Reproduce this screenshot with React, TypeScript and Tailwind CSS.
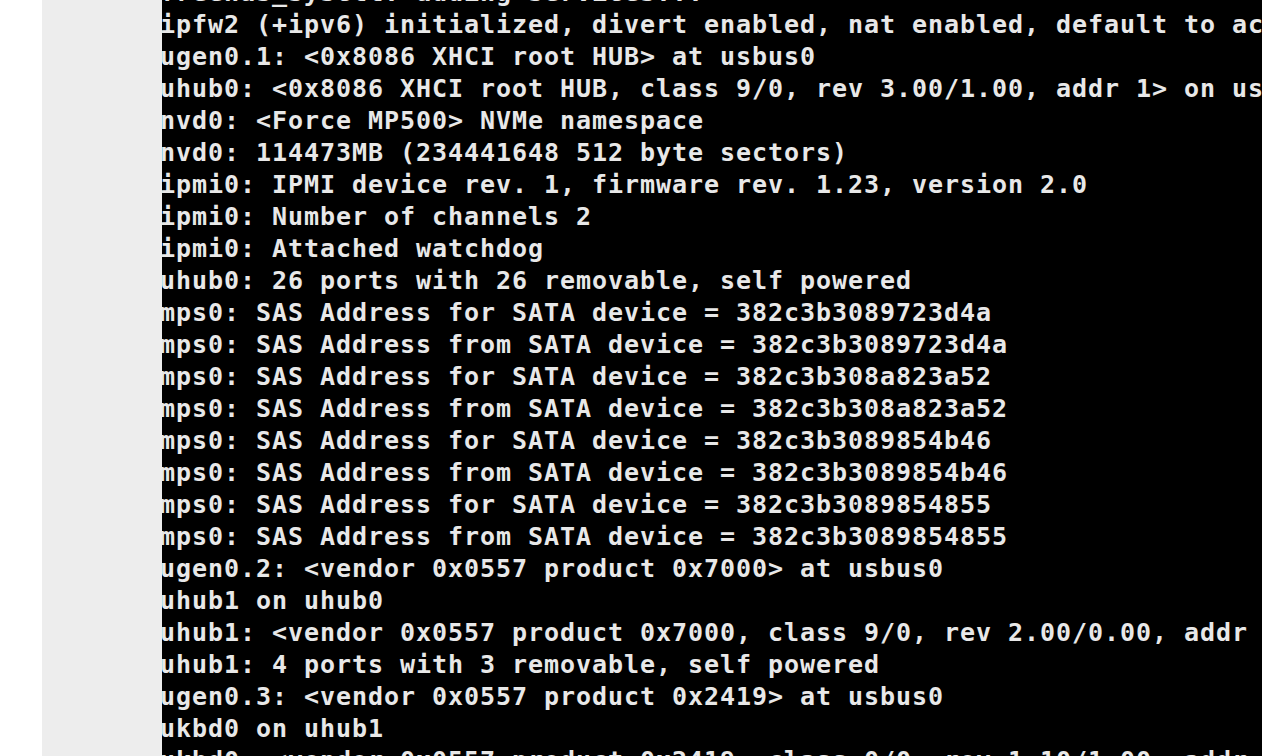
import React from 'react';

const lines: string[] = [
  'freenas_sysctl: adding services...',
  'ipfw2 (+ipv6) initialized, divert enabled, nat enabled, default to accept, logging disabled',
  'ugen0.1: <0x8086 XHCI root HUB> at usbus0',
  'uhub0: <0x8086 XHCI root HUB, class 9/0, rev 3.00/1.00, addr 1> on usbus0',
  'nvd0: <Force MP500> NVMe namespace',
  'nvd0: 114473MB (234441648 512 byte sectors)',
  'ipmi0: IPMI device rev. 1, firmware rev. 1.23, version 2.0',
  'ipmi0: Number of channels 2',
  'ipmi0: Attached watchdog',
  'uhub0: 26 ports with 26 removable, self powered',
  'mps0: SAS Address for SATA device = 382c3b3089723d4a',
  'mps0: SAS Address from SATA device = 382c3b3089723d4a',
  'mps0: SAS Address for SATA device = 382c3b308a823a52',
  'mps0: SAS Address from SATA device = 382c3b308a823a52',
  'mps0: SAS Address for SATA device = 382c3b3089854b46',
  'mps0: SAS Address from SATA device = 382c3b3089854b46',
  'mps0: SAS Address for SATA device = 382c3b3089854855',
  'mps0: SAS Address from SATA device = 382c3b3089854855',
  'ugen0.2: <vendor 0x0557 product 0x7000> at usbus0',
  'uhub1 on uhub0',
  'uhub1: <vendor 0x0557 product 0x7000, class 9/0, rev 2.00/0.00, addr 2> on usbus0',
  'uhub1: 4 ports with 3 removable, self powered',
  'ugen0.3: <vendor 0x0557 product 0x2419> at usbus0',
  'ukbd0 on uhub1',
  'ukbd0: <vendor 0x0557 product 0x2419, class 0/0, rev 1.10/1.00, addr 3> on uhub1',
];

export default function App() {
  return (
    <div className="flex h-[756px] w-full overflow-hidden bg-white">
      {/* left margin + grey gutter */}
      <div className="w-[42px] shrink-0 bg-white" />
      <div className="w-[120px] shrink-0 bg-[#ededed]" />

      {/* console */}
      <div className="flex-1 overflow-hidden bg-black">
        <div
          className="-ml-[2px] -mt-[23px] whitespace-pre text-[25px] font-bold leading-[32px] tracking-[0.95px] text-[#e8e8e8]"
          style={{ fontFamily: '"DejaVu Sans Mono", "Liberation Mono", monospace' }}
        >
          {lines.map((l, i) => (
            <div key={i}>{l}</div>
          ))}
        </div>
      </div>
    </div>
  );
}
